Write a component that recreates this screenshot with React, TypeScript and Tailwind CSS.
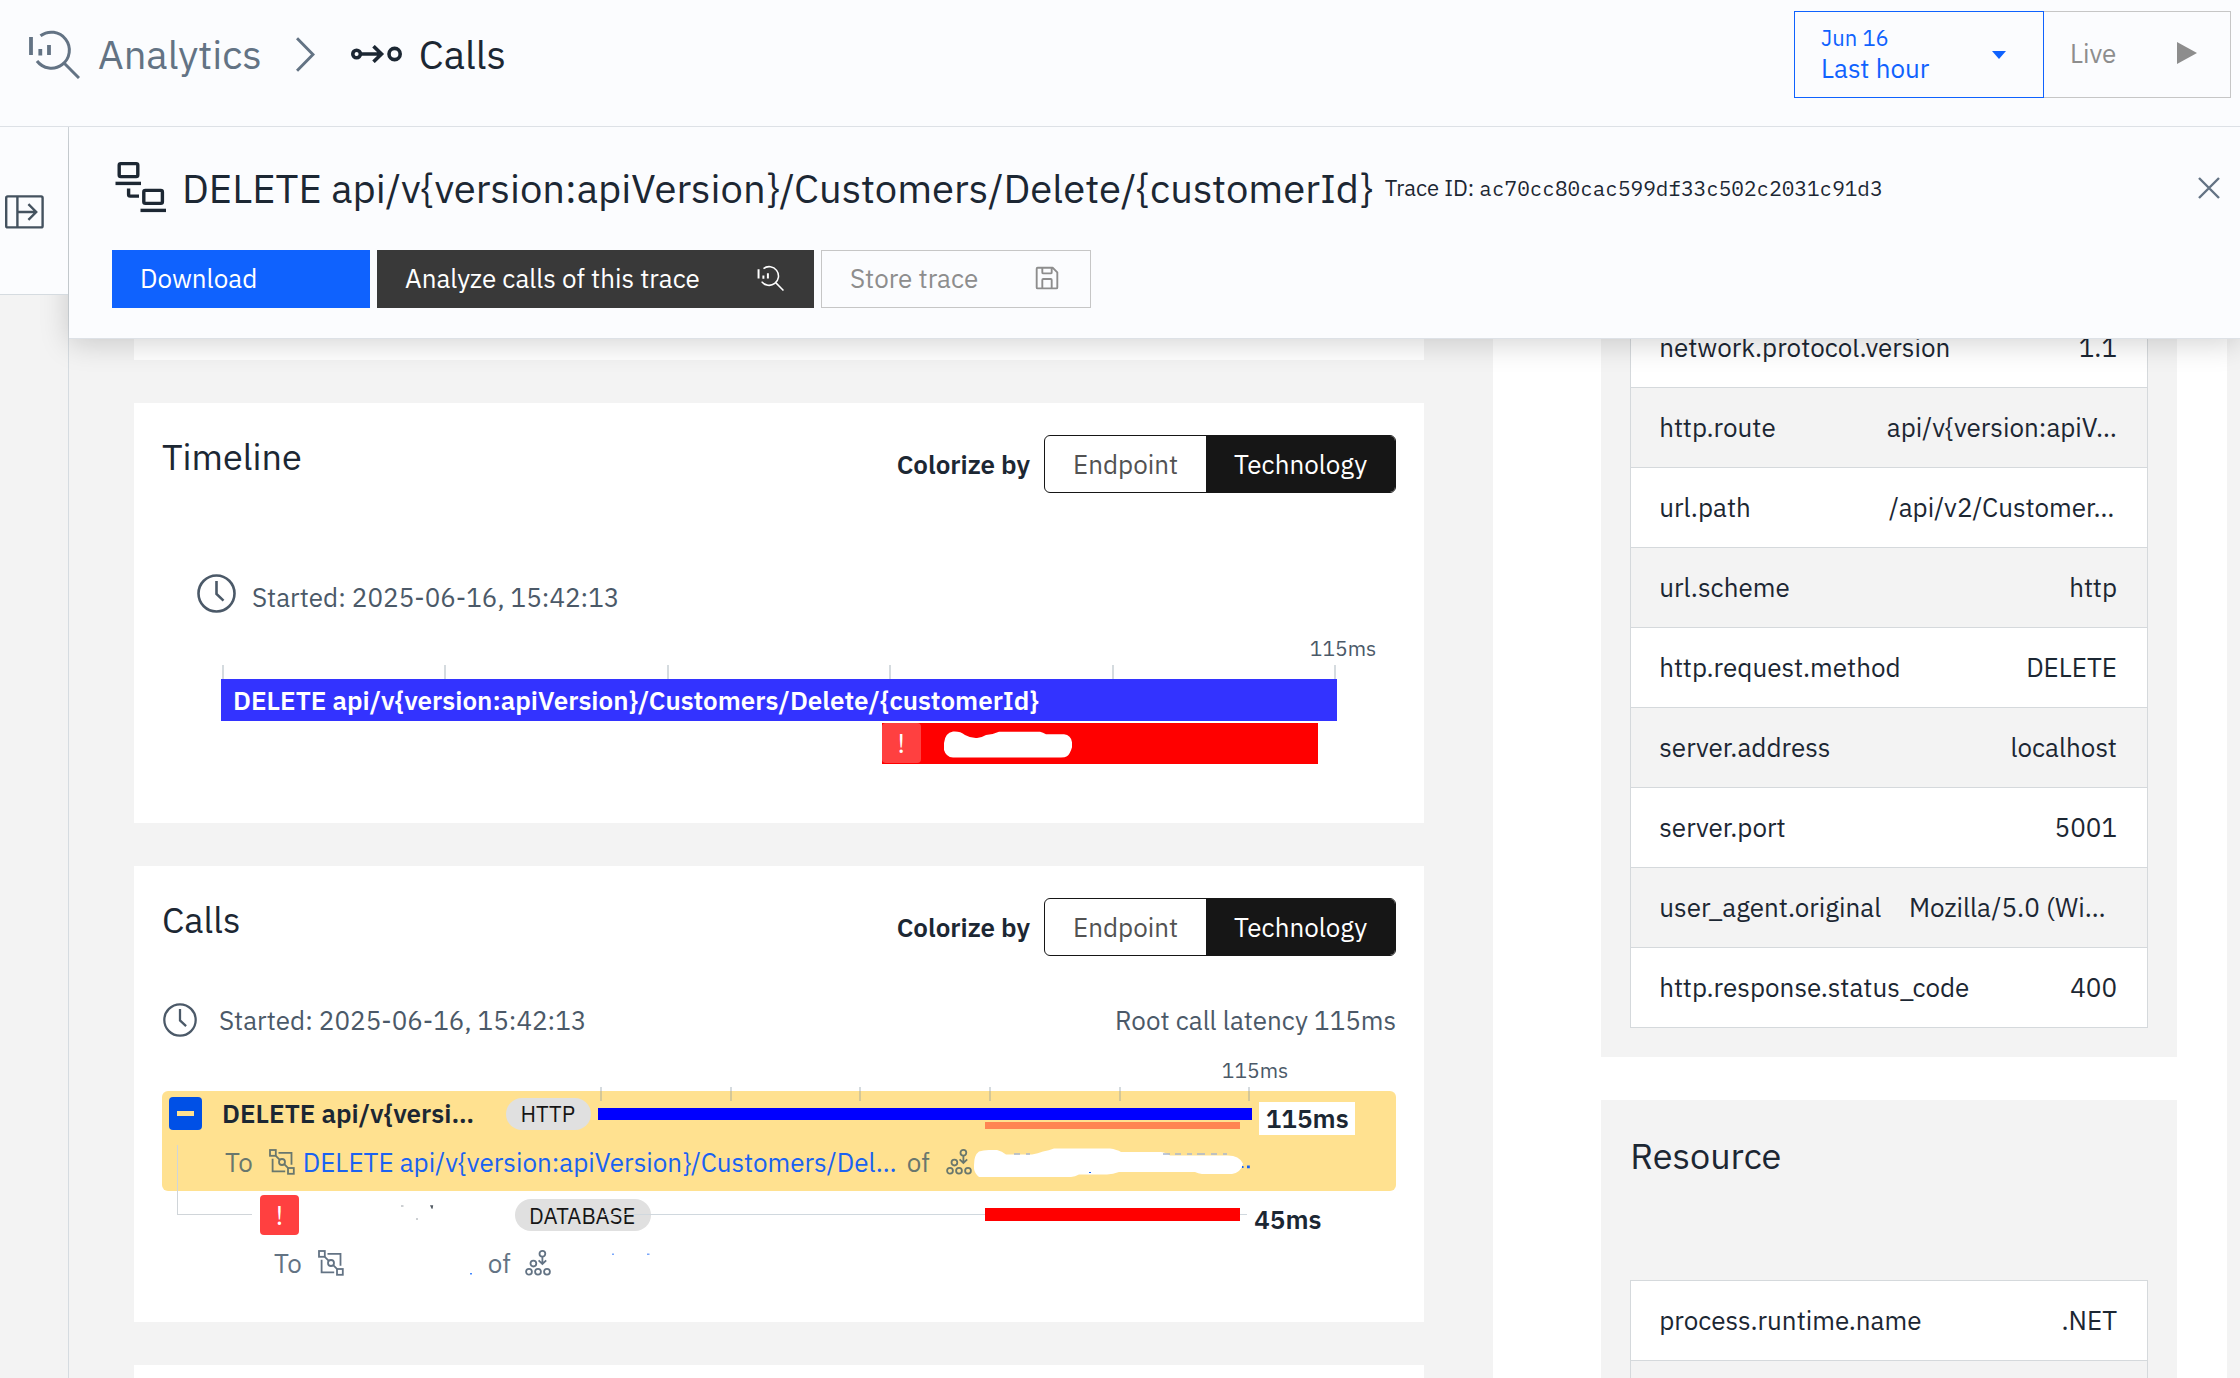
import type { ReactNode } from "react";

/* ---------- icons ---------- */

function AnalyticsIcon({ className, stroke = 3 }: { className: string; stroke?: number }) {
  return (
    <svg viewBox="0 0 52 50" className={className} fill="none" stroke="currentColor" strokeWidth={stroke} aria-hidden="true">
      <path d="M12.5 6.8A18 18 0 1 1 9 32" />
      <path d="M36 34 51 49" />
      <path d="M3 8v18M12.3 20v6.5M21 16v10" strokeWidth={stroke + 0.8} />
    </svg>
  );
}

function ChevronIcon() {
  return (
    <svg viewBox="0 0 19 35" className="h-[35px] w-[19px]" fill="none" stroke="currentColor" strokeWidth="3" aria-hidden="true">
      <path d="M1 1.2 17 17.5 1 33.8" />
    </svg>
  );
}

function CallsIcon() {
  return (
    <svg viewBox="0 0 52 18" className="h-[18px] w-[52px]" fill="none" stroke="currentColor" strokeWidth="3.6" aria-hidden="true">
      <circle cx="5.6" cy="9" r="3.8" />
      <path d="M10 9h20M22.5 1.2 30.5 9l-8 7.800" />
      <circle cx="43.6" cy="9" r="5.6" />
    </svg>
  );
}

function TraceIcon() {
  return (
    <svg viewBox="0 0 54 54" className="h-[54px] w-[54px] shrink-0" fill="none" stroke="currentColor" strokeWidth="3.4" aria-hidden="true">
      <rect x="7.2" y="2.6" width="18.6" height="13" rx="1.6" />
      <path d="M3.5 22.4H29" />
      <path d="M16.6 27.5v6q0 1.6 1.6 1.6H27" />
      <rect x="31.8" y="29.4" width="18.6" height="13" rx="1.6" />
      <path d="M28.5 49.4H54" />
    </svg>
  );
}

function ExpandIcon() {
  return (
    <svg viewBox="0 0 39 34" className="h-[34px] w-[39px]" fill="none" stroke="currentColor" strokeWidth="2.4" aria-hidden="true">
      <rect x="1.2" y="1.4" width="36.4" height="31" rx="1.5" />
      <path d="M12.4 1.4v31M12.4 17H31M23.4 9.2 31.2 17l-7.8 7.8" />
    </svg>
  );
}

function SaveIcon() {
  return (
    <svg viewBox="0 0 32 32" className="h-[30px] w-[30px]" fill="currentColor" aria-hidden="true">
      <path d="M27.71,9.29l-5-5A1,1,0,0,0,22,4H6A2,2,0,0,0,4,6V26a2,2,0,0,0,2,2H26a2,2,0,0,0,2-2V10A1,1,0,0,0,27.71,9.29ZM12,6h8v4H12Zm8,20H12V18h8Zm2,0V18a2,2,0,0,0-2-2H12a2,2,0,0,0-2,2v8H6V6h4v4a2,2,0,0,0,2,2h8a2,2,0,0,0,2-2V6.41l4,4V26Z" />
    </svg>
  );
}

function ClockIcon({ className }: { className: string }) {
  return (
    <svg viewBox="0 0 39 39" className={className} fill="none" stroke="currentColor" strokeWidth="2.6" aria-hidden="true">
      <circle cx="19.5" cy="19.5" r="18" />
      <path d="M19.5 7v13l7 6.6" />
    </svg>
  );
}

function EndpointIcon() {
  return (
    <svg viewBox="0 0 26 26" className="h-[26px] w-[26px] shrink-0" fill="none" stroke="currentColor" strokeWidth="1.8" aria-hidden="true">
      <rect x="1" y="1" width="5.8" height="5.8" />
      <rect x="19" y="19" width="5.8" height="5.8" />
      <circle cx="13" cy="13" r="3" />
      <path d="m6.8 6.8 4 4M15.2 15.2l4 4" />
      <path d="M9.5 3.8h13v12M3.6 9.8v12.6h12.6" />
    </svg>
  );
}

function ServiceIcon() {
  return (
    <svg viewBox="0 0 26 26" className="h-[26px] w-[26px] shrink-0" fill="none" stroke="currentColor" strokeWidth="1.8" aria-hidden="true">
      <circle cx="17.4" cy="3.8" r="2.9" />
      <path d="M17.4 6.8V14M13.6 10.4l3.8 3.6 3.8-3.6" />
      <circle cx="8.4" cy="13.6" r="2.9" />
      <circle cx="4" cy="21.8" r="2.9" />
      <circle cx="13" cy="21.8" r="2.9" />
      <circle cx="22" cy="21.8" r="2.9" />
    </svg>
  );
}

function CloseIcon() {
  return (
    <svg viewBox="0 0 22 22" className="h-[22px] w-[22px]" fill="none" stroke="currentColor" strokeWidth="2.4" aria-hidden="true">
      <path d="m1 1 20 20M21 1 1 21" />
    </svg>
  );
}

/* ---------- shared pieces ---------- */

function ColorizeBy({ id }: { id: string }) {
  return (
    <div className="flex items-center gap-3.5" role="group" aria-labelledby={id}>
      <span id={id} className="font-semibold">Colorize by</span>
      <div className="flex h-[58px] overflow-hidden rounded-md border border-[#161616]">
        <button type="button" aria-pressed="false" className="px-7 text-[#525252]">Endpoint</button>
        <button type="button" aria-pressed="true" className="bg-[#161616] px-7 text-white">Technology</button>
      </div>
    </div>
  );
}

function CardHeader({ title, id }: { title: string; id: string }) {
  return (
    <header className="flex items-start justify-between">
      <h2 className="text-[36px] leading-[44px]">{title}</h2>
      <ColorizeBy id={id} />
    </header>
  );
}

function Ticks({ className }: { className: string }) {
  return (
    <div className={"flex h-3.5 justify-between " + className} aria-hidden="true">
      {[0, 1, 2, 3, 4, 5].map((n) => (
        <span key={n} className="w-0.5 bg-[#8797a2]/35" />
      ))}
    </div>
  );
}

function Bar({ start, width, className, children }: { start: number; width: number; className: string; children?: ReactNode }) {
  return (
    <div className={className} style={{ marginLeft: `${start}%`, width: `${width}%` }}>
      {children}
    </div>
  );
}

function Alert() {
  return (
    <span className="flex h-10 w-[39px] shrink-0 items-center justify-center rounded bg-[#ff4040] text-white">!</span>
  );
}

function Pill({ children }: { children: ReactNode }) {
  return (
    <span className="flex h-8 shrink-0 items-center rounded-full bg-[#e0e0e0] pr-4 pl-3.5 text-[22px] text-[#161616]">{children}</span>
  );
}

type Attribute = { name: string; value: string; valueClass?: string };

function AttributeTable({ rows }: { rows: Attribute[] }) {
  return (
    <table className="block border border-b-0 border-[#d5d9dc]">
      <tbody className="block">
        {rows.map((row, i) => (
          <tr key={i} className="flex h-20 items-center justify-between border-b border-[#d5d9dc] pr-[30px] pl-7 whitespace-nowrap odd:bg-white">
            <th scope="row" className="text-left font-normal">{row.name}</th>
            <td className={row.valueClass}>{row.value}</td>
          </tr>
        ))}
      </tbody>
    </table>
  );
}

const spanAttributes: Attribute[] = [
  { name: "network.protocol.version", value: "1.1" },
  { name: "http.route", value: "api/v{version:apiV…" },
  { name: "url.path", value: "/api/v2/Customer…", valueClass: "min-w-[228px] text-left" },
  { name: "url.scheme", value: "http" },
  { name: "http.request.method", value: "DELETE" },
  { name: "server.address", value: "localhost" },
  { name: "server.port", value: "5001" },
  { name: "user_agent.original", value: "Mozilla/5.0 (Wi…", valueClass: "min-w-[208px] text-left" },
  { name: "http.response.status_code", value: "400" },
];

const resourceAttributes: Attribute[] = [
  { name: "process.runtime.name", value: ".NET" },
  { name: "", value: "" },
];

/* ---------- page sections ---------- */

function TopBar() {
  return (
    <div className="relative z-20 flex h-[127px] shrink-0 items-start justify-between border-b border-[#dde1e6] bg-[#fbfcfe]">
      <nav aria-label="Breadcrumb" className="flex h-[108px] items-center pl-7 text-[40px]">
        <a href="#analytics" className="flex items-center gap-[18px] text-[#637384]">
          <AnalyticsIcon className="h-[50px] w-[52px]" />
          Analytics
        </a>
        <span className="ml-[34px] text-[#637384]"><ChevronIcon /></span>
        <a href="#calls" className="ml-9 flex items-center gap-4">
          <CallsIcon />
          Calls
        </a>
      </nav>
      <div className="mt-[11px] mr-[9px] flex h-[87px]">
        <button type="button" className="flex w-[250px] items-center justify-between border border-[#0f62fe] pr-[37px] pl-[26px] text-left text-[#0f62fe]">
          <span className="flex flex-col pb-1">
            <span className="text-[22px] leading-[30px]">Jun 16</span>
            <span className="leading-[30px]">Last hour</span>
          </span>
          <svg viewBox="0 0 14 8" className="h-2 w-3.5" fill="currentColor" aria-hidden="true"><path d="M0 0h14L7 8z" /></svg>
        </button>
        <button type="button" className="flex w-[187px] items-center justify-between border border-l-0 border-[#c6c6c6] pr-[33px] pb-[3px] pl-[26px] text-[#8d8d8d]">
          Live
          <svg viewBox="0 0 20 22" className="h-[22px] w-5" fill="currentColor" aria-hidden="true"><path d="M0 0v22l20-11z" /></svg>
        </button>
      </div>
    </div>
  );
}

function TraceHeader() {
  return (
    <header className="relative z-10 border-b border-[#dde1e6] bg-[#fbfcfe] pt-[34px] pb-[30px] pl-[43px] shadow-[0_4px_28px_rgba(0,0,0,0.18)]">
      <div className="flex h-[54px] items-center">
        <TraceIcon />
        <h1 className="ml-4 text-[40px] whitespace-nowrap">{"DELETE api/v{version:apiVersion}/Customers/Delete/{customerId}"}</h1>
        <p className="ml-3 text-[22px] whitespace-nowrap">
          Trace ID: <span className="font-['IBM_Plex_Mono','Liberation_Mono',monospace] text-[21px]">ac70cc80cac599df33c502c2031c91d3</span>
        </p>
        <button type="button" aria-label="Close" className="mr-5 ml-auto text-[#637384]"><CloseIcon /></button>
      </div>
      <div className="mt-[35px] flex h-[58px] gap-[7px]">
        <button type="button" className="w-[258px] bg-[#0f62fe] pb-0.5 pl-7 text-left text-white">Download</button>
        <button type="button" className="flex w-[437px] items-center justify-between bg-[#393939] pr-[30px] pb-0.5 pl-7 text-white">
          Analyze calls of this trace
          <AnalyticsIcon className="h-[26px] w-[27px]" />
        </button>
        <button type="button" className="flex w-[270px] items-center justify-between border border-[#c6c6c6] pr-7 pb-0.5 pl-7 text-[#8d8d8d]">
          Store trace
          <SaveIcon />
        </button>
      </div>
    </header>
  );
}

function TimelineCard() {
  return (
    <section className="bg-white px-7 pt-8 pb-[59px]">
      <CardHeader title="Timeline" id="timeline-colorize" />
      <div className="mt-[81px] flex h-10 items-end pl-[35px] text-[#4b5968]">
        <ClockIcon className="mb-px h-[39px] w-[39px]" />
        <span className="ml-4 leading-[34px]">Started: 2025-06-16, 15:42:13</span>
      </div>
      <p className="mt-5 mr-5 text-right text-[21px] leading-7 text-[#4b5968]">115ms</p>
      <Ticks className="mx-[60px] mt-[3px]" />
      <div className="mx-[59px]">
        <Bar start={0} width={100} className="flex h-[42px] items-center bg-[#3333ff] pl-3 font-semibold whitespace-nowrap text-white">
          {"DELETE api/v{version:apiVersion}/Customers/Delete/{customerId}"}
        </Bar>
        <Bar start={59.2} width={39.1} className="mt-0.5 flex h-[41px] bg-[#ff0000]">
          <Alert />
          <svg viewBox="0 0 128 28" className="mt-2 ml-[23px] h-7 w-32" fill="#fff" aria-hidden="true">
            <path d="M0 12Q1 2 9 .6q7-.6 12 3.4 6 3.4 12 3 5-.6 9-3 7-.4 13-3.2h41q3 .8 6 2.4h18q7 .8 8 8v5q-2 7-5 9-2 1.4-6 1.4H9Q2 26 0 19z" />
          </svg>
        </Bar>
      </div>
    </section>
  );
}

function CallsCard() {
  return (
    <section className="bg-white px-7 pt-8 pb-[41px]">
      <CardHeader title="Calls" id="calls-colorize" />
      <div className="mt-[46px] flex h-9 items-center pl-px text-[#4b5968]">
        <ClockIcon className="h-[34px] w-[34px]" />
        <span className="ml-[22px]">Started: 2025-06-16, 15:42:13</span>
        <span className="ml-auto">Root call latency 115ms</span>
      </div>
      <p className="mt-[18px] mr-[108px] text-right text-[21px] leading-7 text-[#4b5968]">115ms</p>
      <Ticks className="relative z-10 mt-[3px] mr-[146px] -mb-2.5 ml-[438px]" />

      <div className="relative">
        <div className="h-[100px] rounded-md bg-[#ffe190] pt-1.5">
          <div className="flex h-[33px]">
            <div className="flex w-[436px] shrink-0 items-center pr-[7px] pl-[7px]">
              <button type="button" aria-label="Collapse call" className="flex h-[33px] w-[33px] items-center justify-center rounded-sm bg-[#0050e6]">
                <span className="h-[5px] w-[17px] bg-[#ffe190]" />
              </button>
              <span className="ml-5 font-semibold whitespace-nowrap">{"DELETE api/v{versi…"}</span>
              <span className="ml-auto"><Pill>HTTP</Pill></span>
            </div>
            <div className="flex-1 pt-[11px]">
              <Bar start={0} width={100} className="h-3 bg-[#0000ff]" />
              <Bar start={59.2} width={39} className="mt-0.5 h-[7px] bg-[#ff8552]" />
            </div>
            <div className="w-36 shrink-0 pt-[5px] pl-[7px]">
              <span className="flex h-[33px] w-24 items-center justify-center bg-white font-semibold">115ms</span>
            </div>
          </div>
          <div className="mt-3.5 flex h-9 items-center pl-[63px] text-[#69776d]">
            <span>To</span>
            <span className="ml-4"><EndpointIcon /></span>
            <a href="#endpoint" className="ml-2 w-[588px] shrink-0 whitespace-nowrap text-[#1a62f2]">{"DELETE api/v{version:apiVersion}/Customers/Del…"}</a>
            <span className="ml-4">of</span>
            <span className="ml-4"><ServiceIcon /></span>
            <svg viewBox="0 0 276 30" className="ml-0.5 h-[30px] w-[276px]" aria-hidden="true">
              <path d="M0 18Q0 8 5 4.500q4-1.500 10-1.500h8q5 1 9 4.500h26q6-1 11-3 6-1 11-3h56q7 1 11 3.500h40q6 1 9 3.500h58q11 0 15 8-2 9-11 10.500h-30q-4-.5-7-2h-76q-6 2-12 2.500h-28q-4 2-8 2.500h-20q-4 1.500-8 2H8Q1 28 0 22z" fill="#fff" />
              <path d="M40 7h6M52 7h4M189 7h7M201 7h6M213 7h5M223 7h8M237 7h6M249 7h4" stroke="#a9b6cf" strokeWidth="1.6" />
              <path d="M116 25v1" stroke="#1a62f2" strokeWidth="2" />
              <path d="M273 18.500h2.800v2.800H273zM268 19h1.500v2H268z" fill="#1a62f2" />
            </svg>
          </div>
        </div>

        <div className="flex h-11 pt-1">
          <div className="flex w-[436px] shrink-0 items-center pl-[98px]">
            <Alert />
            <svg viewBox="0 0 216 40" className="h-10 w-[216px] shrink-0" aria-hidden="true">
              <path d="M131 10.200h3.200l-.6 3.600h-1z" fill="#525a63" />
              <path d="M102 11h2.500M117 24h2" stroke="#9aa0a6" />
            </svg>
            <Pill>DATABASE</Pill>
          </div>
          <div className="relative flex-1">
            <span className="absolute top-[19px] right-[5px] left-1 h-px bg-[#d0d8de]" />
            <Bar start={59.2} width={39} className="relative mt-[13px] h-[13px] bg-[#ff0000]" />
          </div>
          <div className="w-36 shrink-0 pt-1.5 pl-0.5 leading-9 font-semibold">45ms</div>
        </div>

        <div className="mt-2.5 flex h-9 items-center pl-28 text-[#637384]">
          <span>To</span>
          <span className="ml-4"><EndpointIcon /></span>
          <svg viewBox="0 0 128 36" className="h-9 w-32" aria-hidden="true">
            <path d="M126 28h2v1.500h-2z" fill="#4589ff" />
          </svg>
          <span className="ml-4">of</span>
          <span className="ml-3.5"><ServiceIcon /></span>
          <svg viewBox="0 0 110 36" className="h-9 w-[110px]" aria-hidden="true">
            <path d="M61 8.500h2V10h-2zM96 8.500h2.500V10H96z" fill="#7ba8fb" />
          </svg>
        </div>

        {/* connector from the parent call to its child */}
        <span className="absolute top-[54px] left-[15px] h-[70px] w-[75px] border-b border-l border-[#d0d5d9]" />
      </div>
    </section>
  );
}

export default function App() {
  return (
    <div className="flex h-screen flex-col overflow-hidden bg-white font-['IBM_Plex_Sans',Roboto,sans-serif] text-[26px] text-[#1c2733]">
      <TopBar />
      <div className="flex min-h-0 flex-1">
        <aside className="flex w-[69px] shrink-0 flex-col border-r border-[#d5dbe0] bg-[#f3f3f3]">
          <div className="relative z-20 h-[168px] border-b border-[#d5dbe0] bg-[#fbfcfe] pt-[68px] pl-[5px] text-[#44525f]">
            <button type="button" aria-label="Expand sidebar"><ExpandIcon /></button>
          </div>
        </aside>

        <main className="flex min-w-0 flex-1 flex-col">
          <TraceHeader />
          <div className="flex min-h-0 flex-1 overflow-hidden">
            <div className="flex min-w-0 flex-1 flex-col gap-[43px] bg-[#f3f3f3] pr-[69px] pl-[65px]">
              <section className="h-[21px] shrink-0 bg-white" />
              <TimelineCard />
              <CallsCard />
              <section className="h-20 shrink-0 bg-white" />
            </div>

            <div className="flex w-[33.8%] shrink-0 flex-col gap-[43px] pr-[50px] pl-[108px]">
              <section className="bg-[#f3f3f3] px-[29px] pb-[29px]">
                <div className="-mt-8">
                  <AttributeTable rows={spanAttributes} />
                </div>
              </section>
              <section className="bg-[#f3f3f3] px-[29px] pt-[34px]">
                <h2 className="mb-[102px] text-[36px] leading-[44px]">Resource</h2>
                <AttributeTable rows={resourceAttributes} />
              </section>
            </div>
            <div className="w-[13px] shrink-0 bg-[#f3f3f3]" />
          </div>
        </main>
      </div>
    </div>
  );
}
